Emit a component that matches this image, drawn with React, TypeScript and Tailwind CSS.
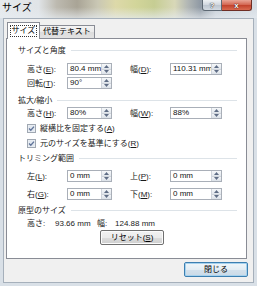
import React from "react";

const Spin = () => (
  <div className="flex flex-col w-[10px] shrink-0 h-full border-l border-[#cfd4db]">
    <div className="flex-1 flex items-center justify-center border-b border-[#cfd4db] bg-[linear-gradient(#f6f8fa,#e1e6ec)]">
      <svg width="5" height="3" viewBox="0 0 5 3">
        <path d="M0 3 L2.5 0 L5 3 Z" fill="#5f6d85" />
      </svg>
    </div>
    <div className="flex-1 flex items-center justify-center bg-[linear-gradient(#f2f4f7,#dbe1e8)]">
      <svg width="5" height="3" viewBox="0 0 5 3">
        <path d="M0 0 L2.5 3 L5 0 Z" fill="#5f6d85" />
      </svg>
    </div>
  </div>
);

const Input = ({ value, wide }: { value: string; wide?: boolean }) => (
  <div
    className={
      wide
        ? "flex w-[52px] h-[12px] border border-[#a9afb8] bg-white"
        : "flex w-[45px] h-[12px] border border-[#a9afb8] bg-white"
    }
  >
    <div className="flex-1 overflow-hidden whitespace-nowrap pl-[2px] text-[8px] leading-[10px] text-[#111]">
      {value}
    </div>
    <Spin />
  </div>
);

const Label = ({ children }: { children: React.ReactNode }) => (
  <div className="w-[40px] shrink-0 whitespace-nowrap text-[8px] leading-[11px] text-[#1a1a1a]">{children}</div>
);

const Header = ({ text, className }: { text: string; className: string }) => (
  <div className={"flex items-center h-[11px] pl-[11px] pr-[9px] " + className}>
    <span className="whitespace-nowrap text-[8px] leading-[11px] text-[#1a1a1a]">{text}</span>
    <div className="flex-1 h-px bg-[#dde3e8] ml-[5px]" />
  </div>
);

const Check = () => (
  <svg width="9" height="9" viewBox="0 0 9 9" className="shrink-0">
    <rect x="0.5" y="0.5" width="8" height="8" fill="#eef2f6" stroke="#a0a8b2" />
    <rect x="1.5" y="1.5" width="6" height="6" fill="#e2e8ef" />
    <path d="M2 4.5 L3.8 6.3 L7 2.6" fill="none" stroke="#60749a" strokeWidth="1.3" />
  </svg>
);

export default function App() {
  return (
    <div className="w-[257px] h-[286px] overflow-hidden flex flex-col bg-[#d9e0e7] font-['Liberation_Sans','Noto_Sans_CJK_JP',sans-serif]">
      {/* title bar */}
      <div className="relative h-[18px] shrink-0 flex items-start bg-[linear-gradient(90deg,#e6eaed_0%,#e0e4e7_15%,#bdbab0_22%,#a9a496_30%,#c9c7b4_38%,#ddd9a9_45%,#d2d59a_53%,#c6cd93_60%,#d8d8b8_68%,#b2b7b5_73%,#8f99a4_78%,#c8d0d8_84%,#d6dde4_100%)]">
        <div className="absolute inset-0 bg-[linear-gradient(rgba(255,255,255,0)_40%,rgba(230,235,240,0.7)_100%)]" />
        <span className="relative ml-[2px] mt-[1px] text-[10px] leading-[13px] text-black">サイズ</span>
        <div className="relative ml-auto mr-[5px] flex">
          <div className="w-[20px] h-[11px] flex items-center justify-center rounded-bl-[3px] border border-t-0 border-[#5d6873] bg-[linear-gradient(#eef1f4,#cfd6de_50%,#bcc5cf_51%,#d3dae2)]">
            <span className="text-[8px] leading-[9px] font-bold text-white [text-shadow:0_0_1px_#222,0_0_1px_#222]">?</span>
          </div>
          <div className="w-[30px] h-[11px] flex items-center justify-center rounded-br-[3px] border border-l-0 border-t-0 border-[#6e2d24] bg-[linear-gradient(#e9a596,#d46a56_45%,#c0402a_50%,#d96a50)]">
            <span className="text-[8px] leading-[9px] font-bold text-white [text-shadow:0_0_1px_#3a0d08,0_0_1px_#3a0d08]">x</span>
          </div>
        </div>
      </div>

      {/* client area */}
      <div className="mx-[3px] h-[265px] shrink-0 flex flex-col border border-[#a6b0bb] bg-[#f0f0f0]">
        {/* tabs */}
        <div className="h-[19px] shrink-0 flex items-end pl-[3px]">
          <div className="relative z-10 -mb-px w-[33px] h-[17px] flex items-center justify-center border border-b-0 border-[#898c95] bg-white">
            <span className="px-[1px] border border-dotted border-[#333] text-[8px] leading-[10px] text-black">サイズ</span>
          </div>
          <div className="-ml-px w-[56px] h-[13px] flex items-center justify-center border border-b-0 border-[#898c95] bg-[linear-gradient(#f4f4f4,#e9e9e9_50%,#dcdcdc_51%,#e2e2e2)]">
            <span className="text-[8px] leading-[10px] text-black">代替テキスト</span>
          </div>
        </div>

        {/* panel */}
        <div className="ml-[2px] w-[241px] h-[221px] shrink-0 flex flex-col border border-[#898c95] bg-white">
          <Header text="サイズと角度" className="mt-[6px]" />
          <div className="mt-[7px] flex items-center h-[12px] pl-[20px]">
            <Label>高さ(<u>E</u>):</Label>
            <Input value="80.4 mm" />
            <div className="w-[18px]" />
            <Label>幅(<u>D</u>):</Label>
            <Input value="110.31 mm" wide />
          </div>
          <div className="mt-[2px] flex items-center h-[12px] pl-[20px]">
            <Label>回転(<u>T</u>):</Label>
            <Input value="90°" />
          </div>

          <Header text="拡大/縮小" className="mt-[6px]" />
          <div className="mt-[1px] flex items-center h-[12px] pl-[20px]">
            <Label>高さ(<u>H</u>):</Label>
            <Input value="80%" />
            <div className="w-[18px]" />
            <Label>幅(<u>W</u>):</Label>
            <Input value="88%" wide />
          </div>
          <div className="mt-[4px] flex items-center h-[11px] pl-[20px] gap-[4px]">
            <Check />
            <span className="whitespace-nowrap text-[8px] leading-[11px] text-[#1a1a1a]">縦横比を固定する(<u>A</u>)</span>
          </div>
          <div className="mt-[4px] flex items-center h-[11px] pl-[20px] gap-[4px]">
            <Check />
            <span className="whitespace-nowrap text-[8px] leading-[11px] text-[#1a1a1a]">元のサイズを基準にする(<u>R</u>)</span>
          </div>

          <Header text="トリミング範囲" className="mt-[4px]" />
          <div className="mt-[6px] flex items-center h-[12px] pl-[20px]">
            <Label>左(<u>L</u>):</Label>
            <Input value="0 mm" />
            <div className="w-[18px]" />
            <Label>上(<u>P</u>):</Label>
            <Input value="0 mm" wide />
          </div>
          <div className="mt-[6px] flex items-center h-[12px] pl-[20px]">
            <Label>右(<u>G</u>):</Label>
            <Input value="0 mm" />
            <div className="w-[18px]" />
            <Label>下(<u>M</u>):</Label>
            <Input value="0 mm" wide />
          </div>

          <Header text="原型のサイズ" className="mt-[5px]" />
          <div className="mt-[2px] flex items-center h-[11px] pl-[20px] text-[8px] leading-[11px] text-[#1a1a1a] whitespace-nowrap">
            <span className="w-[28px]">高さ:</span>
            <span className="w-[42px]">93.66 mm</span>
            <span className="w-[18px]">幅:</span>
            <span>124.88 mm</span>
          </div>
          <div className="mt-[1px] ml-[93px] w-[64px] h-[15px] flex items-center justify-center rounded-[2px] border border-[#707070] bg-[linear-gradient(#f2f2f2,#ebebeb_50%,#dddddd_51%,#cfcfcf)] shadow-[inset_0_0_0_1px_#fbfbfb]">
            <span className="text-[8px] leading-[10px] text-black">リセット(<u>S</u>)</span>
          </div>
        </div>

        {/* bottom button */}
        <div className="mt-[3px] flex justify-end pr-[5px]">
          <div className="w-[64px] h-[15px] flex items-center justify-center rounded-[2px] border border-[#3c7fb1] bg-[linear-gradient(#f0f6fa,#e3edf4_50%,#d3e1ec_51%,#cbdae7)] shadow-[inset_0_0_0_1px_#a6d2ee]">
            <span className="text-[8px] leading-[10px] text-black">閉じる</span>
          </div>
        </div>
      </div>
    </div>
  );
}
